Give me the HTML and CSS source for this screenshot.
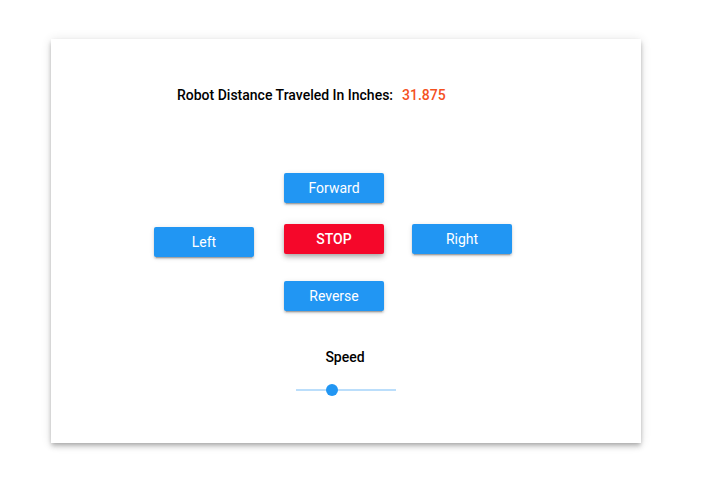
FILE: index.html
```html
<!DOCTYPE html>
<html>
<head>
<meta charset="utf-8">
<link rel="stylesheet" href="styles.css">
</head>
<body>
<div class="card">
  <div class="distance">
    <span class="distance-label">Robot Distance Traveled In Inches:</span>
    <span class="distance-value">31.875</span>
  </div>
  <div class="pad">
    <button class="btn btn-forward">Forward</button>
    <button class="btn btn-left">Left</button>
    <button class="btn btn-stop">STOP</button>
    <button class="btn btn-right">Right</button>
    <button class="btn btn-reverse">Reverse</button>
  </div>
  <div class="speed-label">Speed</div>
  <div class="slider">
    <div class="slider-track"></div>
    <div class="slider-thumb" style="left: 30%;"></div>
  </div>
</div>
</body>
</html>
```
FILE: styles.css
```css
html, body {
  margin: 0;
  padding: 0;
  background: #ffffff;
}
body {
  padding: 39px 0 53px 51px;
  min-height: 496px;
  box-sizing: border-box;
  font-family: Roboto, "Noto Sans", sans-serif;
  color: #000000;
}
.card {
  width: 590px;
  height: 404px;
  background: #ffffff;
  box-sizing: border-box;
  box-shadow: 0 2px 4px -1px rgba(0,0,0,0.2), 0 4px 5px 0 rgba(0,0,0,0.14), 0 1px 10px 0 rgba(0,0,0,0.12);
  display: flex;
  flex-direction: column;
}
.distance {
  margin-top: 46px;
  padding-left: 126px;
  display: flex;
  align-items: baseline;
  gap: 9px;
  font-size: 14px;
  line-height: 20px;
  font-weight: 500;
}
.distance-value {
  color: #f4511e;
}
.pad {
  margin-top: 68px;
  margin-left: 103px;
  display: grid;
  grid-template-columns: 130px 128px 100px;
  grid-template-rows: 51px 57px 30px;
}
.btn {
  width: 100px;
  height: 30px;
  border: none;
  border-radius: 2px;
  background: #2196f3;
  color: #ffffff;
  font-family: Roboto, "Noto Sans", sans-serif;
  font-size: 14px;
  font-weight: 400;
  padding: 0;
  box-shadow: 0 3px 1px -2px rgba(0,0,0,0.2), 0 2px 2px 0 rgba(0,0,0,0.14), 0 1px 5px 0 rgba(0,0,0,0.12);
}
.btn-forward { grid-column: 2; grid-row: 1; }
.btn-left { grid-column: 1; grid-row: 2; margin-top: 3px; }
.btn-stop {
  grid-column: 2; grid-row: 2;
  background: #f5072a;
  font-weight: 500;
  box-shadow: 0 2px 4px -1px rgba(0,0,0,0.2), 0 4px 5px 0 rgba(0,0,0,0.14), 0 1px 10px 0 rgba(0,0,0,0.12);
}
.btn-right { grid-column: 3; grid-row: 2; }
.btn-reverse { grid-column: 2; grid-row: 3; }
.speed-label {
  margin-top: 36px;
  text-align: center;
  font-size: 14px;
  line-height: 20px;
  font-weight: 500;
  padding-right: 2px;
}
.slider {
  margin: 11px auto 0;
  width: 100px;
  height: 24px;
  position: relative;
  display: flex;
  align-items: center;
}
.slider-track {
  width: 100%;
  height: 2px;
  background: #bbdefb;
}
.slider-thumb {
  position: absolute;
  top: 6px;
  width: 12px;
  height: 12px;
  border-radius: 50%;
  background: #2196f3;
}
```
